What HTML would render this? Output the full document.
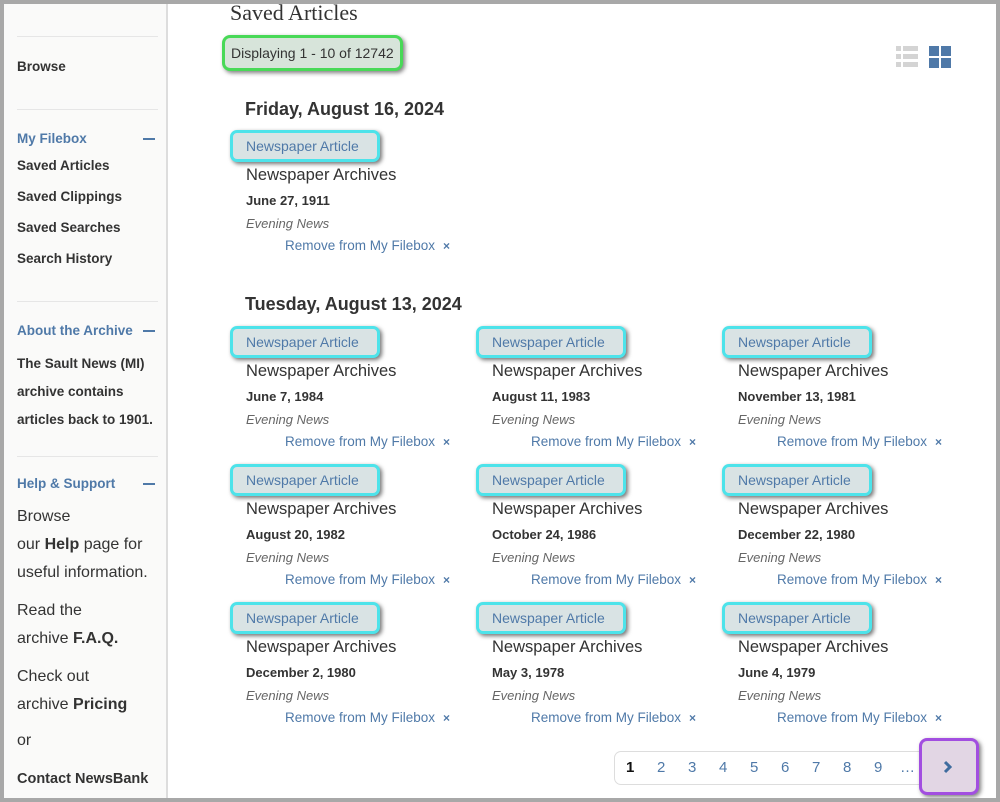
<!DOCTYPE html>
<html><head><meta charset="utf-8"><style>
*{margin:0;padding:0;box-sizing:border-box}
body{width:1000px;height:802px;overflow:hidden;background:#a8a8a8;font-family:"Liberation Sans",sans-serif;position:relative}
.page{position:absolute;left:4px;top:4px;width:992px;height:794px;background:#fff;overflow:hidden}
.side{position:absolute;left:0;top:0;width:164px;height:794px;background:#fafaf9;border-right:2px solid #ddd}
.a{position:absolute;white-space:nowrap}
.hr{position:absolute;left:13px;width:141px;height:1px;background:#e6e6e6}
.sb{font-weight:bold;color:#333;font-size:13.5px}
.sh{font-weight:bold;color:#4f79a8;font-size:13.5px}
.minus{position:absolute;left:139px;width:12px;height:2px;background:#4f79a8}
.sn{color:#333;font-size:16px}
.it{position:absolute;width:240px;height:130px}
.badge{position:absolute;left:0;top:0;width:150px;height:32px;border:3px solid #4de3ea;border-radius:7px;background:#d9e3e4;box-shadow:2px 2px 4px rgba(0,0,0,.55);color:#4f79a8;font-size:14px;line-height:27px;padding-left:13px}
.arc{position:absolute;left:16px;top:36px;font-size:16.5px;color:#333;white-space:nowrap}
.dt{position:absolute;left:16px;top:63px;font-size:13px;font-weight:bold;color:#333;white-space:nowrap}
.en{position:absolute;left:16px;top:86px;font-size:13px;font-style:italic;color:#666;white-space:nowrap}
.rm{position:absolute;left:55px;top:108px;font-size:13.5px;color:#4f79a8;white-space:nowrap}
.rm b{margin-left:8px;font-size:12px}
.day{position:absolute;left:241px;font-size:18px;font-weight:bold;color:#333}
</style></head><body><div class="page">
<div class="side">
<div class="hr" style="top:32px"></div>
<div class="a sb" style="left:13px;top:55px">Browse</div>
<div class="hr" style="top:105px"></div>
<div class="a sh" style="left:13px;top:127px">My Filebox</div><div class="minus" style="top:134px"></div>
<div class="a sb" style="left:13px;top:154px">Saved Articles</div>
<div class="a sb" style="left:13px;top:185px">Saved Clippings</div>
<div class="a sb" style="left:13px;top:216px">Saved Searches</div>
<div class="a sb" style="left:13px;top:247px">Search History</div>
<div class="hr" style="top:297px"></div>
<div class="a sh" style="left:13px;top:319px">About the Archive</div><div class="minus" style="top:326px"></div>
<div class="a sb" style="left:13px;top:346px;line-height:28px">The Sault News (MI)<br>archive contains<br>articles back to 1901.</div>
<div class="hr" style="top:452px"></div>
<div class="a sh" style="left:13px;top:472px">Help &amp; Support</div><div class="minus" style="top:479px"></div>
<div class="a sn" style="left:13px;top:499px;line-height:28px">Browse<br>our <b>Help</b> page for<br>useful information.</div>
<div class="a sn" style="left:13px;top:593px;line-height:28px">Read the<br>archive <b>F.A.Q.</b></div>
<div class="a sn" style="left:13px;top:659px;line-height:28px">Check out<br>archive <b>Pricing</b></div>
<div class="a sn" style="left:13px;top:728px">or</div>
<div class="a sb" style="left:13px;top:767px;font-size:14.5px">Contact NewsBank</div>
</div>
<div class="a" style="left:226px;top:-4px;font-family:'Liberation Serif',serif;font-size:22px;color:#333">Saved Articles</div>
<div class="a" style="left:218px;top:31px;width:181px;height:36px;border:3px solid #48d957;border-radius:8px;background:#d7e4da;box-shadow:2px 2px 4px rgba(0,0,0,.5);font-size:14px;color:#333;line-height:30px;padding-left:6px">Displaying 1 - 10 of 12742</div>
<svg class="a" style="left:892px;top:42px" width="22" height="22" viewBox="0 0 22 22" fill="#d4d4d4"><rect x="0" y="0" width="5" height="5"/><rect x="7" y="0" width="15" height="5"/><rect x="0" y="8" width="5" height="5"/><rect x="7" y="8" width="15" height="5"/><rect x="0" y="16" width="5" height="5"/><rect x="7" y="16" width="15" height="5"/></svg>
<svg class="a" style="left:925px;top:42px" width="22" height="22" viewBox="0 0 22 22" fill="#4f79a8"><rect x="0" y="0" width="10" height="10"/><rect x="12" y="0" width="10" height="10"/><rect x="0" y="12" width="10" height="10"/><rect x="12" y="12" width="10" height="10"/></svg>
<div class="day" style="top:95px">Friday, August 16, 2024</div>
<div class="day" style="top:290px">Tuesday, August 13, 2024</div>

<div class="it" style="left:226px;top:126px"><div class="badge">Newspaper Article</div><div class="arc">Newspaper Archives</div><div class="dt">June 27, 1911</div><div class="en">Evening News</div><div class="rm">Remove from My Filebox<b>×</b></div></div>

<div class="it" style="left:226px;top:322px"><div class="badge">Newspaper Article</div><div class="arc">Newspaper Archives</div><div class="dt">June 7, 1984</div><div class="en">Evening News</div><div class="rm">Remove from My Filebox<b>×</b></div></div>
<div class="it" style="left:472px;top:322px"><div class="badge">Newspaper Article</div><div class="arc">Newspaper Archives</div><div class="dt">August 11, 1983</div><div class="en">Evening News</div><div class="rm">Remove from My Filebox<b>×</b></div></div>
<div class="it" style="left:718px;top:322px"><div class="badge">Newspaper Article</div><div class="arc">Newspaper Archives</div><div class="dt">November 13, 1981</div><div class="en">Evening News</div><div class="rm">Remove from My Filebox<b>×</b></div></div>

<div class="it" style="left:226px;top:460px"><div class="badge">Newspaper Article</div><div class="arc">Newspaper Archives</div><div class="dt">August 20, 1982</div><div class="en">Evening News</div><div class="rm">Remove from My Filebox<b>×</b></div></div>
<div class="it" style="left:472px;top:460px"><div class="badge">Newspaper Article</div><div class="arc">Newspaper Archives</div><div class="dt">October 24, 1986</div><div class="en">Evening News</div><div class="rm">Remove from My Filebox<b>×</b></div></div>
<div class="it" style="left:718px;top:460px"><div class="badge">Newspaper Article</div><div class="arc">Newspaper Archives</div><div class="dt">December 22, 1980</div><div class="en">Evening News</div><div class="rm">Remove from My Filebox<b>×</b></div></div>

<div class="it" style="left:226px;top:598px"><div class="badge">Newspaper Article</div><div class="arc">Newspaper Archives</div><div class="dt">December 2, 1980</div><div class="en">Evening News</div><div class="rm">Remove from My Filebox<b>×</b></div></div>
<div class="it" style="left:472px;top:598px"><div class="badge">Newspaper Article</div><div class="arc">Newspaper Archives</div><div class="dt">May 3, 1978</div><div class="en">Evening News</div><div class="rm">Remove from My Filebox<b>×</b></div></div>
<div class="it" style="left:718px;top:598px"><div class="badge">Newspaper Article</div><div class="arc">Newspaper Archives</div><div class="dt">June 4, 1979</div><div class="en">Evening News</div><div class="rm">Remove from My Filebox<b>×</b></div></div>

<div class="a" style="left:610px;top:747px;width:357px;height:34px;border:1px solid #ddd;border-radius:7px;background:#fff"></div>
<div class="a" style="left:622px;top:755px;font-size:15px;color:#4f79a8;word-spacing:0">
<span style="color:#111;font-weight:bold;display:inline-block;width:31px">1</span><span style="display:inline-block;width:31px">2</span><span style="display:inline-block;width:31px">3</span><span style="display:inline-block;width:31px">4</span><span style="display:inline-block;width:31px">5</span><span style="display:inline-block;width:31px">6</span><span style="display:inline-block;width:31px">7</span><span style="display:inline-block;width:31px">8</span><span style="display:inline-block;width:26px">9</span><span>…</span></div>
<div class="a" style="left:915px;top:734px;width:60px;height:57px;border:3px solid #a24ee0;border-radius:8px;background:#e2d6e4;box-shadow:2px 2px 4px rgba(0,0,0,.5)"></div>
<svg class="a" style="left:939px;top:756px" width="10" height="14" viewBox="0 0 10 14"><path d="M2 2 L7 7 L2 12" stroke="#3f6c9e" stroke-width="3" fill="none"/></svg>
</div></body></html>
